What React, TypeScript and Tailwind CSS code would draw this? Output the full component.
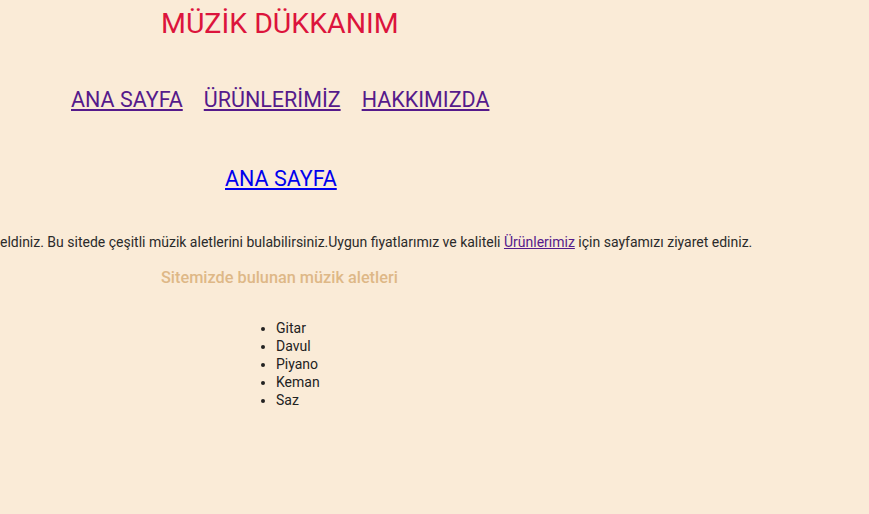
export default function App() {
  return (
    <div className="min-h-[514px] w-full overflow-hidden bg-[#faebd7] font-['Roboto',sans-serif] text-[#222]">
      <h1 className="ml-[161px] pt-[9px] text-[28.5px] leading-[29px] font-normal text-[#dc143c]">
        MÜZİK DÜKKANIM
      </h1>

      <nav className="mt-[51px] ml-[71px] flex gap-[21px] text-[21.5px] leading-[21px]">
        <a href="#" className="text-[#551a8b] underline">ANA SAYFA</a>
        <a href="#" className="text-[#551a8b] underline">ÜRÜNLERİMİZ</a>
        <a href="#" className="text-[#551a8b] underline">HAKKIMIZDA</a>
      </nav>

      <div className="mt-[58px] ml-[225px] text-[21.5px] leading-[21px]">
        <a href="#" className="text-[#0000ee] underline">ANA SAYFA</a>
      </div>

      <p className="mt-[45px] whitespace-nowrap text-[14px] leading-[16px] text-[#2a2a2a]">
        <span className="inline-flex w-0 justify-end whitespace-nowrap">Müzik dükkanımıza hoş g</span>
        eldiniz. Bu sitede çeşitli müzik aletlerini bulabilirsiniz.Uygun fiyatlarımız ve kaliteli{" "}
        <a href="#" className="text-[#551a8b] underline">Ürünlerimiz</a> için sayfamızı ziyaret ediniz.
      </p>

      <h3 className="mt-[19px] ml-[161px] text-[16.3px] leading-[18px] font-medium text-[#deb887]">
        Sitemizde bulunan müzik aletleri
      </h3>

      <ul className="mt-[32px] ml-[276px] list-disc text-[14px] leading-[18px]">
        <li>Gitar</li>
        <li>Davul</li>
        <li>Piyano</li>
        <li>Keman</li>
        <li>Saz</li>
      </ul>
    </div>
  );
}
